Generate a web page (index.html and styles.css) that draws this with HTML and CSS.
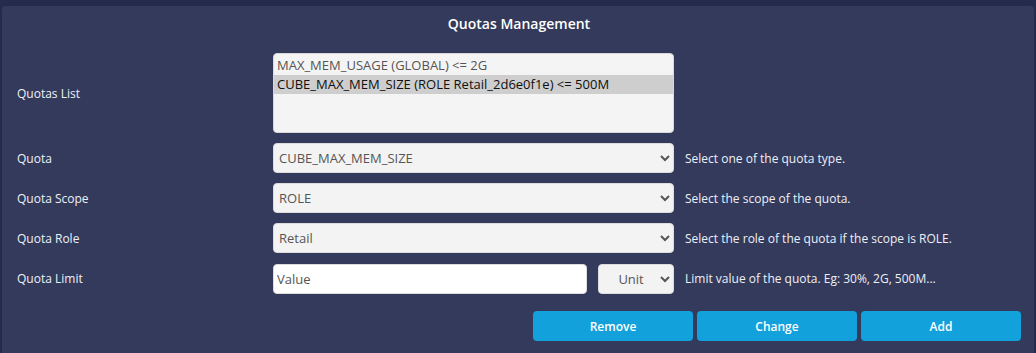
FILE: index.html
```html
<!DOCTYPE html>
<html lang="en">
<head>
  <meta charset="UTF-8" />
  <meta name="viewport" content="width=device-width, initial-scale=1.0"/>
  <title>Quotas Management</title>
  <link rel="stylesheet" href="styles.css">
</head>
<body>

  <div class="panel">
    <h2 class="panel-title">Quotas Management</h2>

    <div class="form-grid">
      <label class="field-label">Quotas List</label>
      <select class="quota-list" size="4" multiple>
        <option>MAX_MEM_USAGE (GLOBAL) &lt;= 2G</option>
        <option selected>CUBE_MAX_MEM_SIZE (ROLE Retail_2d6e0f1e) &lt;= 500M</option>
      </select>
      <span class="help"></span>

      <label class="field-label">Quota</label>
      <select class="field">
        <option>CUBE_MAX_MEM_SIZE</option>
        <option>MAX_MEM_USAGE</option>
      </select>
      <span class="help">Select one of the quota type.</span>

      <label class="field-label">Quota Scope</label>
      <select class="field">
        <option>ROLE</option>
        <option>GLOBAL</option>
      </select>
      <span class="help">Select the scope of the quota.</span>

      <label class="field-label">Quota Role</label>
      <select class="field">
        <option>Retail</option>
      </select>
      <span class="help">Select the role of the quota if the scope is ROLE.</span>

      <label class="field-label">Quota Limit</label>
      <div class="limit-row">
        <input type="text" class="limit-input" placeholder="Value" />
        <select class="unit-select">
          <option>Unit</option>
          <option>%</option>
          <option>M</option>
          <option>G</option>
        </select>
      </div>
      <span class="help">Limit value of the quota. Eg: 30%, 2G, 500M...</span>
    </div>

    <div class="actions">
      <button class="btn">Remove</button>
      <button class="btn">Change</button>
      <button class="btn">Add</button>
    </div>
  </div>

</body>
</html>
```

FILE: styles.css
```css
body {
  margin: 0;
  background-color: #252b4c;
  font-family: 'Open Sans', 'Noto Sans', sans-serif;
  font-size: 12px;
  color: #eef0f6;
  height: 353px;
  overflow: hidden;
}
.panel {
  margin: 6px 2px 0 2px;
  background-color: #333a5c;
  border-radius: 4px 4px 0 0;
  padding: 8px 13px 0 15px;
  height: 347px;
  box-sizing: border-box;
}
.panel-title {
  margin: 0;
  font-size: 14px;
  line-height: 20px;
  font-weight: 600;
  text-align: center;
  color: #fff;
}
.form-grid {
  display: grid;
  grid-template-columns: 245px 401px 1fr;
  column-gap: 11px;
  row-gap: 10px;
  align-items: center;
  margin-top: 19px;
}
.field-label {
  font-size: 12px;
}
.help {
  font-size: 12px;
}
select, input {
  font-family: 'Open Sans', 'Noto Sans', sans-serif;
  font-size: 13px;
  color: #555;
  box-sizing: border-box;
}
.quota-list {
  width: 401px;
  height: 80px;
  background-color: #f4f4f4;
  border: 1px solid #d8d8d8;
  border-radius: 4px;
  padding: 2px 0;
  overflow: hidden;
}
.quota-list option {
  padding: 0 3px;
  line-height: 19px;
  height: 19px;
}
.quota-list option:checked {
  background-color: #cecece;
}
.field {
  width: 401px;
  height: 30px;
  background-color: #f3f3f3;
  border: 1px solid #dcdcdc;
  border-radius: 4px;
  padding: 0 1px;
}
.limit-row {
  display: flex;
  gap: 11px;
  align-items: center;
}
.limit-input {
  width: 315px;
  height: 30px;
  border: 1px solid #dcdcdc;
  border-radius: 4px;
  background-color: #fff;
  padding: 0 3px;
  margin-top: 1px;
}
.limit-input::placeholder {
  color: #555;
}
.unit-select {
  width: 76px;
  height: 30px;
  background-color: #f3f3f3;
  border: 1px solid #dcdcdc;
  border-radius: 4px;
  padding: 0 10px 0 12px;
  text-align: center;
}
.actions {
  display: flex;
  justify-content: flex-end;
  gap: 4px;
  margin-top: 17px;
}
.btn {
  width: 160px;
  height: 30px;
  border: none;
  border-radius: 4px;
  background-color: #13a1db;
  color: #fff;
  font-family: 'Open Sans', 'Noto Sans', sans-serif;
  font-size: 12px;
  font-weight: 600;
  cursor: pointer;
}
```
